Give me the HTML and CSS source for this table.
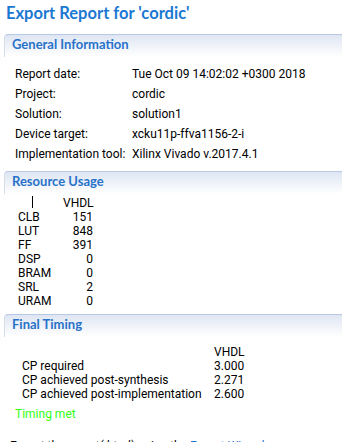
FILE: index.html
```html
<!DOCTYPE html>
<html lang="en">
<head>
<meta charset="UTF-8">
<title>Export Report</title>
<link rel="stylesheet" href="styles.css">
</head>
<body>
<h1 class="title">Export Report for 'cordic'</h1>

<div class="section">
    <h2 class="section-head">General Information</h2>
    <div class="info">
        <span>Report date:</span><span>Tue Oct 09 14:02:02 +0300 2018</span>
        <span>Project:</span><span>cordic</span>
        <span>Solution:</span><span>solution1</span>
        <span>Device target:</span><span>xcku11p-ffva1156-2-i</span>
        <span>Implementation tool:</span><span>Xilinx Vivado v.2017.4.1</span>
    </div>
</div>

<div class="section resources">
    <h2 class="section-head">Resource Usage</h2>
    <div class="usage">
        <span><i class="bar"></i></span><span class="num">VHDL</span>
        <span>CLB</span><span class="num">151</span>
        <span>LUT</span><span class="num">848</span>
        <span>FF</span><span class="num">391</span>
        <span>DSP</span><span class="num">0</span>
        <span>BRAM</span><span class="num">0</span>
        <span>SRL</span><span class="num">2</span>
        <span>URAM</span><span class="num">0</span>
    </div>
</div>

<div class="section timing">
    <h2 class="section-head">Final Timing</h2>
    <div class="timing-table">
        <span></span><span class="num">VHDL</span>
        <span>CP required</span><span class="num">3.000</span>
        <span>CP achieved post-synthesis</span><span class="num">2.271</span>
        <span>CP achieved post-implementation</span><span class="num">2.600</span>
    </div>
    <p class="met">Timing met</p>
</div>

<p class="export">Export the report(.html) using the <a href="#">Export Wizard</a></p>
</body>
</html>
```

FILE: styles.css
```css
body {
    margin: 0;
    padding: 0;
    font-family: Roboto, "Liberation Sans", sans-serif;
    font-size: 12px;
    color: #000;
    background: #fff;
    white-space: nowrap;
    overflow: hidden;
}

.title {
    margin: 0;
    padding: 0 6px;
    font-family: Lato, "Liberation Sans", sans-serif;
    font-size: 16.5px;
    line-height: 26px;
    color: #1b78d2;
}

/* blue gradient bar on top of each block */
.section-head {
    margin: 8px 1px 0 4px;
    padding: 0 0 4px 7px;
    font-family: Lato, "Liberation Sans", sans-serif;
    font-size: 13px;
    line-height: 18px;
    color: #2872c9;
    border-top: 1px solid #b9c9e3;
    border-left: 1px solid #d3ddec;
    border-top-left-radius: 4px;
    background: linear-gradient(#dee6f3, #fff);
}

.info {
    display: grid;
    grid-template-columns: 117px auto;
    margin-top: 7px;
    padding-left: 15px;
    line-height: 20px;
}

.resources .section-head {
    margin-top: 7px;
}

.usage {
    display: grid;
    grid-template-columns: 45px 30px;
    margin-top: 2px;
    padding-left: 18px;
    line-height: 14px;
}

.num {
    text-align: right;
}

.bar {
    display: inline-block;
    width: 1px;
    height: 12px;
    margin-left: 14px;
    background: #000;
    vertical-align: -1px;
}

.timing .section-head {
    margin-top: 6px;
}

.timing-table {
    display: grid;
    grid-template-columns: 192px 30px;
    margin-top: 8px;
    padding-left: 22px;
    line-height: 14px;
}

.met {
    margin: 6px 0 0;
    padding-left: 15px;
    line-height: 14px;
    color: #33ff11;
}

.export {
    margin: 18px 0 0;
    padding-left: 10px;
    line-height: 14px;
}

.export a {
    color: #1b6fd0;
    text-decoration: none;
}
```
